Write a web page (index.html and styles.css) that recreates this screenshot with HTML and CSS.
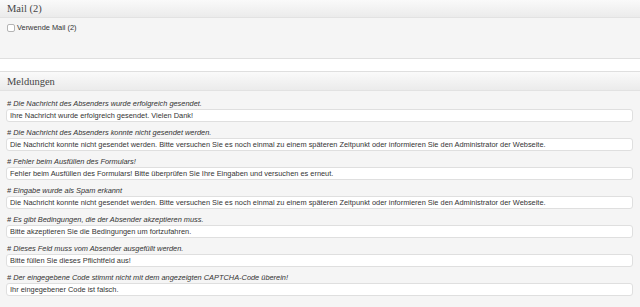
FILE: index.html
```
<!DOCTYPE html>
<html lang="de">

<head>
    <meta charset="UTF-8">
    <meta name="viewport" content="width=device-width, initial-scale=1.0">
    <title>Kontaktformular - Meldungen</title>
    <link rel="stylesheet" href="styles.css">
</head>

<body>
    <div class="postbox mail2">
        <h3 class="hndle">Mail (2)</h3>
        <div class="inside">
            <label class="check"><input type="checkbox"> Verwende Mail (2)</label>
        </div>
    </div>

    <div class="postbox messages">
        <h3 class="hndle">Meldungen</h3>
        <div class="inside scroll">
            <div class="msg">
                <em># Die Nachricht des Absenders wurde erfolgreich gesendet.</em>
                <input type="text" value="Ihre Nachricht wurde erfolgreich gesendet. Vielen Dank!">
            </div>
            <div class="msg">
                <em># Die Nachricht des Absenders konnte nicht gesendet werden.</em>
                <input type="text" value="Die Nachricht konnte nicht gesendet werden. Bitte versuchen Sie es noch einmal zu einem späteren Zeitpunkt oder informieren Sie den Administrator der Webseite.">
            </div>
            <div class="msg">
                <em># Fehler beim Ausfüllen des Formulars!</em>
                <input type="text" value="Fehler beim Ausfüllen des Formulars! Bitte überprüfen Sie Ihre Eingaben und versuchen es erneut.">
            </div>
            <div class="msg">
                <em># Eingabe wurde als Spam erkannt</em>
                <input type="text" value="Die Nachricht konnte nicht gesendet werden. Bitte versuchen Sie es noch einmal zu einem späteren Zeitpunkt oder informieren Sie den Administrator der Webseite.">
            </div>
            <div class="msg">
                <em># Es gibt Bedingungen, die der Absender akzeptieren muss.</em>
                <input type="text" value="Bitte akzeptieren Sie die Bedingungen um fortzufahren.">
            </div>
            <div class="msg">
                <em># Dieses Feld muss vom Absender ausgefüllt werden.</em>
                <input type="text" value="Bitte füllen Sie dieses Pflichtfeld aus!">
            </div>
            <div class="msg">
                <em># Der eingegebene Code stimmt nicht mit dem angezeigten CAPTCHA-Code überein!</em>
                <input type="text" value="Ihr eingegebener Code ist falsch.">
            </div>
            <div class="msg">
                <em># Die Antwort auf die Quizfrage ist falsch.</em>
                <input type="text" value="Ihre Antwort ist falsch.">
            </div>
            <div class="msg">
                <em># Die angegebene E-Mail-Adresse scheint ungültig zu sein.</em>
                <input type="text" value="Die E-Mail-Adresse scheint ungültig zu sein.">
            </div>
            <div class="msg">
                <em># Beim Hochladen der Datei ist ein unbekannter Fehler aufgetreten.</em>
                <input type="text" value="Fehler beim Hochladen der Datei.">
            </div>
            <div class="msg">
                <em># Hochgeladene Datei hat einen nicht erlaubten Dateityp.</em>
                <input type="text" value="Dieser Dateityp ist nicht erlaubt.">
            </div>
            <div class="msg">
                <em># Hochgeladene Datei ist zu groß.</em>
                <input type="text" value="Die Datei ist zu groß.">
            </div>
            <div class="msg">
                <em># Beim Hochladen ist ein PHP-Fehler aufgetreten.</em>
                <input type="text" value="Fehler beim Hochladen der Datei.">
            </div>
            <div class="msg">
                <em># Das Datumsformat ist ungültig.</em>
                <input type="text" value="Das Datumsformat ist ungültig.">
            </div>
            <div class="msg">
                <em># Das Datum liegt vor dem frühesten erlaubten Datum.</em>
                <input type="text" value="Das Datum liegt zu früh.">
            </div>
            <div class="msg">
                <em># Das Datum liegt nach dem spätesten erlaubten Datum.</em>
                <input type="text" value="Das Datum liegt zu spät.">
            </div>
            <div class="msg">
                <em># Das Zahlenformat ist ungültig.</em>
                <input type="text" value="Das Zahlenformat ist ungültig.">
            </div>
            <div class="msg">
                <em># Die Zahl ist kleiner als das erlaubte Minimum.</em>
                <input type="text" value="Die Zahl ist zu klein.">
            </div>
            <div class="msg">
                <em># Die Zahl ist größer als das erlaubte Maximum.</em>
                <input type="text" value="Die Zahl ist zu groß.">
            </div>
            <div class="msg">
                <em># Die URL ist ungültig.</em>
                <input type="text" value="Die URL ist ungültig.">
            </div>
            <div class="msg">
                <em># Die Telefonnummer ist ungültig.</em>
                <input type="text" value="Die Telefonnummer ist ungültig.">
            </div>
            <div class="msg">
                <em># Die Eingabe ist zu lang.</em>
                <input type="text" value="Die Eingabe ist zu lang.">
            </div>
        </div>
    </div>
</body>

</html>
```

FILE: styles.css
```
html, body {
    height: 100%;
}

body {
    margin: 0;
    padding: 0;
    background: #ffffff;
    font-family: "Liberation Sans", Arial, sans-serif;
    font-size: 7.4px;
    color: #333333;
    overflow: hidden;
    display: flex;
    flex-direction: column;
}

.postbox {
    background: #f5f5f5;
    border-bottom: 1px solid #dfdfdf;
}

.messages {
    border-top: 1px solid #dfdfdf;
    margin-top: 12px;
    flex: 1;
    display: flex;
    flex-direction: column;
    min-height: 0;
    border-bottom: none;
    padding-bottom: 4px;
}

.hndle {
    margin: 0;
    height: 17px;
    line-height: 18px;
    padding: 0 7px;
    font-family: "Liberation Serif", Georgia, serif;
    font-size: 10.5px;
    font-weight: normal;
    color: #464646;
    background: linear-gradient(to bottom, #fafafa, #ebebeb);
    border-bottom: 1px solid #e2e2e2;
}

.messages .hndle {
    height: 18px;
    line-height: 20px;
}

.mail2 .inside {
    height: 40px;
    padding: 5px 7px 0;
    box-sizing: border-box;
}

.check {
    display: flex;
    align-items: center;
    gap: 2px;
}

.check input {
    appearance: none;
    margin: 0;
    width: 8px;
    height: 8px;
    border: 1px solid #b4b4b4;
    border-radius: 2px;
    background: #ffffff;
    box-sizing: border-box;
}

.scroll {
    flex: 1;
    min-height: 0;
    overflow-y: scroll;
    padding: 8px 7px 0 6px;
}

.scroll::-webkit-scrollbar {
    width: 10px;
}

.scroll::-webkit-scrollbar-track {
    background: #f8f8f8;
    border-left: 1px solid #ececec;
}

.scroll::-webkit-scrollbar-thumb {
    background: #c2c2c2;
    border: 3px solid transparent;
    background-clip: padding-box;
    border-radius: 5px;
}

.msg {
    display: flex;
    flex-direction: column;
    gap: 1px;
    margin-bottom: 6px;
}

.msg em {
    display: block;
    height: 9px;
    line-height: 9px;
    padding-left: 1px;
}

.msg input {
    height: 13px;
    margin: 0;
    padding: 0 3px;
    box-sizing: border-box;
    border: 1px solid #dfdfdf;
    border-radius: 3px;
    background: #ffffff;
    font-family: "Liberation Sans", Arial, sans-serif;
    font-size: 7.4px;
    color: #333333;
    outline: none;
}
```
